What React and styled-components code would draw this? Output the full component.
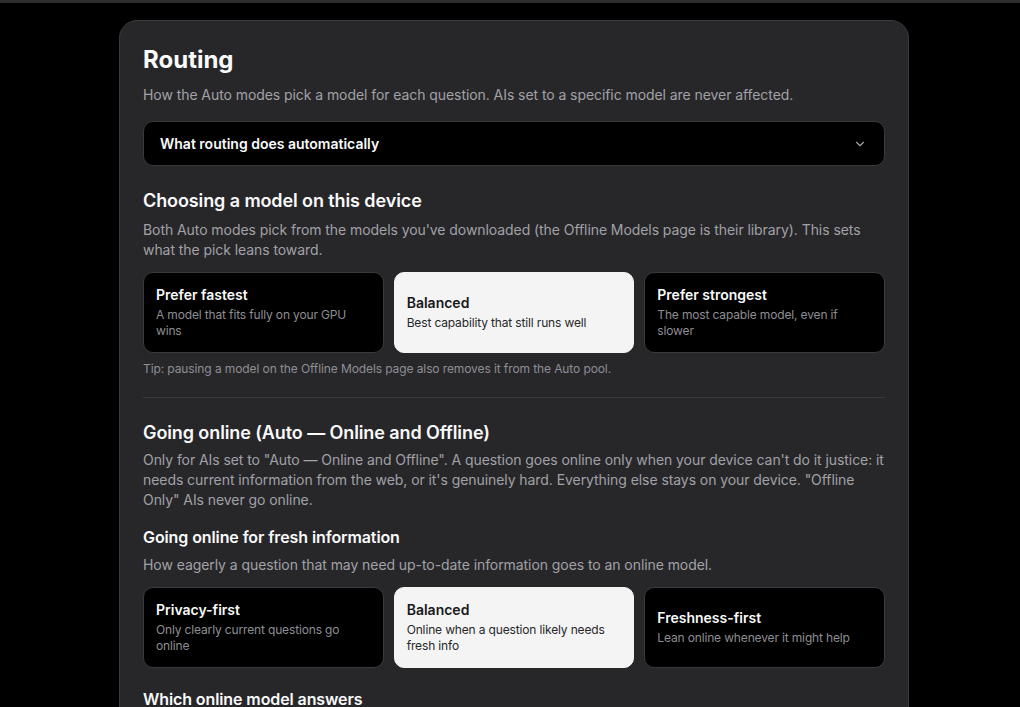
import React, { useState } from "react";
import styled, { createGlobalStyle } from "styled-components";

const GlobalStyle = createGlobalStyle`
  * { box-sizing: border-box; }
  body {
    margin: 0;
    background: #000;
    font-family: Inter, "Noto Sans", sans-serif;
    color: #fafafa;
  }
`;

const deviceOptions = [
  { id: "fast", title: "Prefer fastest", desc: "A model that fits fully on your GPU wins" },
  { id: "balanced", title: "Balanced", desc: "Best capability that still runs well" },
  { id: "strong", title: "Prefer strongest", desc: "The most capable model, even if slower" },
];

const freshOptions = [
  { id: "privacy", title: "Privacy-first", desc: "Only clearly current questions go online" },
  { id: "balanced", title: "Balanced", desc: "Online when a question likely needs fresh info" },
  { id: "fresh", title: "Freshness-first", desc: "Lean online whenever it might help" },
];

const Chevron = () => (
  <svg width="14" height="14" viewBox="0 0 24 24" fill="none" stroke="currentColor" strokeWidth="2" strokeLinecap="round" strokeLinejoin="round">
    <path d="m6 9 6 6 6-6" />
  </svg>
);

const OptionGroup = ({ options, value, onChange }) => (
  <Options>
    {options.map((o) => (
      <Option key={o.id} $active={value === o.id} onClick={() => onChange(o.id)}>
        <OptionTitle>{o.title}</OptionTitle>
        <OptionDesc $active={value === o.id}>{o.desc}</OptionDesc>
      </Option>
    ))}
  </Options>
);

const App = () => {
  const [device, setDevice] = useState("balanced");
  const [fresh, setFresh] = useState("balanced");

  return (
    <>
      <GlobalStyle />
      <TopBar />
      <Page>
        <Card>
          <Title>Routing</Title>
          <Lead>
            How the Auto modes pick a model for each question. AIs set to a specific model are never affected.
          </Lead>
          <Disclosure>
            <span>What routing does automatically</span>
            <Chevron />
          </Disclosure>

          <SectionTitle>Choosing a model on this device</SectionTitle>
          <Text>
            Both Auto modes pick from the models you've downloaded (the Offline Models page is their library). This sets
            what the pick leans toward.
          </Text>
          <OptionGroup options={deviceOptions} value={device} onChange={setDevice} />
          <Tip>Tip: pausing a model on the Offline Models page also removes it from the Auto pool.</Tip>

          <Divider />

          <SectionTitle>Going online (Auto — Online and Offline)</SectionTitle>
          <Text $gap={5}>
            Only for AIs set to "Auto — Online and Offline". A question goes online only when your device can't do it justice: it
            needs current information from the web, or it's genuinely hard. Everything else stays on your device. "Offline
            Only" AIs never go online.
          </Text>

          <SubTitle $gap={16}>Going online for fresh information</SubTitle>
          <Text>How eagerly a question that may need up-to-date information goes to an online model.</Text>
          <OptionGroup options={freshOptions} value={fresh} onChange={setFresh} />

          <SubTitle $gap={20}>Which online model answers</SubTitle>
          <Text>Pick the online model that handles questions sent off the device.</Text>
        </Card>
      </Page>
    </>
  );
};

const TopBar = styled.div`
  height: 3px;
  background: #2e2e31;
`;

const Page = styled.main`
  padding: 17px 0 0 119px;
  height: 704px;
  overflow: hidden;
`;

const Card = styled.section`
  width: 790px;
  background: #27272a;
  border: 1px solid #3a3a3e;
  border-radius: 18px;
  padding: 22px 23px 40px;
`;

const Title = styled.h1`
  margin: 0;
  font-size: 24px;
  line-height: 34px;
  font-weight: 700;
  letter-spacing: 0;
  color: #fafafa;
`;

const Lead = styled.p`
  margin: 8px 0 0;
  font-size: 14px;
  line-height: 20px;
  letter-spacing: -0.07px;
  color: #a1a1a6;
`;

const Disclosure = styled.button`
  display: flex;
  align-items: center;
  justify-content: space-between;
  width: 100%;
  height: 45px;
  margin-top: 16px;
  padding: 0 17px 0 16px;
  background: #000;
  border: 1px solid #3a3a3e;
  border-radius: 10px;
  color: #fafafa;
  font-family: inherit;
  font-size: 14px;
  font-weight: 600;
  letter-spacing: 0;
  cursor: pointer;
  svg { color: #a1a1a6; }
`;

const SectionTitle = styled.h2`
  margin: 23px 0 0;
  font-size: 18px;
  line-height: 24px;
  font-weight: 600;
  letter-spacing: -0.1px;
  color: #fafafa;
`;

const SubTitle = styled.h3`
  margin: ${({ $gap }) => $gap ?? 18}px 0 0;
  font-size: 16px;
  line-height: 22px;
  font-weight: 600;
  letter-spacing: -0.1px;
  color: #fafafa;
`;

const Text = styled.p`
  margin: ${({ $gap }) => $gap ?? 7}px 0 0;
  font-size: 14px;
  line-height: 20px;
  letter-spacing: -0.07px;
  color: #a1a1a6;
`;

const Options = styled.div`
  display: grid;
  grid-template-columns: repeat(3, 1fr);
  gap: 10px;
  margin-top: 12px;
`;

const Option = styled.button`
  display: flex;
  flex-direction: column;
  justify-content: center;
  height: 81px;
  padding: 0 12px;
  text-align: left;
  font-family: inherit;
  border-radius: 10px;
  border: 1px solid ${({ $active }) => ($active ? "#f4f4f5" : "#3a3a3e")};
  background: ${({ $active }) => ($active ? "#f4f4f5" : "#000")};
  color: ${({ $active }) => ($active ? "#18181b" : "#fafafa")};
  cursor: pointer;
`;

const OptionTitle = styled.span`
  font-size: 14px;
  line-height: 18px;
  font-weight: 600;
  letter-spacing: 0;
`;

const OptionDesc = styled.span`
  margin-top: 3px;
  font-size: 12px;
  line-height: 16px;
  letter-spacing: -0.15px;
  color: ${({ $active }) => ($active ? "#27272a" : "#8e8e93")};
`;

const Tip = styled.p`
  margin: 8px 0 0;
  font-size: 12px;
  line-height: 16px;
  letter-spacing: -0.1px;
  color: #8e8e93;
`;

const Divider = styled.hr`
  margin: 20px 0 0;
  border: none;
  border-top: 1px solid #3a3a3e;
`;

export default App;
